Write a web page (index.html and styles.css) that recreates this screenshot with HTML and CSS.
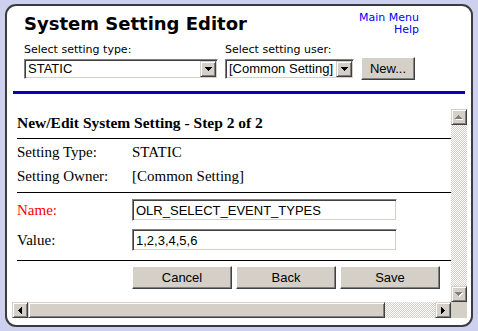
FILE: index.html
```html
<!DOCTYPE html>
<html lang="en">
<head>
    <meta charset="UTF-8">
    <title>System Setting Editor</title>
    <link rel="stylesheet" href="styles.css">
</head>
<body>
    <div class="frame">
        <div class="header">
            <h1 class="title">System Setting Editor</h1>
            <div class="links">
                <a href="#">Main Menu</a>
                <a href="#">Help</a>
            </div>
        </div>

        <div class="pickers">
            <div class="picker picker-type">
                <label>Select setting type:</label>
                <div class="combo">
                    <span class="combo-text">STATIC</span>
                    <span class="combo-btn">
                        <svg width="7" height="4" viewBox="0 0 7 4"><path d="M0 0h7v1H6v1H5v1H4v1H3V3H2V2H1V1H0z" fill="#000"/></svg>
                    </span>
                </div>
            </div>
            <div class="picker picker-user">
                <label>Select setting user:</label>
                <div class="combo">
                    <span class="combo-text">[Common Setting]</span>
                    <span class="combo-btn">
                        <svg width="7" height="4" viewBox="0 0 7 4"><path d="M0 0h7v1H6v1H5v1H4v1H3V3H2V2H1V1H0z" fill="#000"/></svg>
                    </span>
                </div>
            </div>
            <button class="btn btn-new">New...</button>
        </div>

        <div class="rule"></div>

        <div class="pane">
            <div class="viewport">
                <div class="content">
                    <h2 class="step-title">New/Edit System Setting - Step 2 of 2</h2>
                    <hr>
                    <div class="info-row">
                        <span>Setting Type:</span>
                        <span>STATIC</span>
                    </div>
                    <div class="info-row">
                        <span>Setting Owner:</span>
                        <span>[Common Setting]</span>
                    </div>
                    <hr class="hr-mid">
                    <div class="field-row">
                        <label for="name" class="required">Name:</label>
                        <input type="text" id="name" value="OLR_SELECT_EVENT_TYPES">
                    </div>
                    <div class="field-row">
                        <label for="value">Value:</label>
                        <input type="text" id="value" value="1,2,3,4,5,6">
                    </div>
                    <hr class="hr-end">
                    <div class="actions">
                        <button class="btn">Cancel</button>
                        <button class="btn">Back</button>
                        <button class="btn">Save</button>
                    </div>
                </div>
            </div>

            <!-- vertical scrollbar (disabled) -->
            <div class="vbar">
                <span class="sb-btn">
                    <svg width="8" height="5" viewBox="0 0 8 5">
                        <path d="M3 0h1v1h1v1h1v1h1v1H0V3h1V2h1V1h1z" fill="#fff" transform="translate(1 1)"/>
                        <path d="M3 0h1v1h1v1h1v1h1v1H0V3h1V2h1V1h1z" fill="#808080"/>
                    </svg>
                </span>
                <span class="sb-track"></span>
                <span class="sb-btn">
                    <svg width="8" height="5" viewBox="0 0 8 5">
                        <path d="M0 0h7v1H6v1H5v1H4v1H3V3H2V2H1V1H0z" fill="#fff" transform="translate(1 1)"/>
                        <path d="M0 0h7v1H6v1H5v1H4v1H3V3H2V2H1V1H0z" fill="#808080"/>
                    </svg>
                </span>
            </div>

            <!-- horizontal scrollbar -->
            <div class="hbar">
                <span class="sb-btn">
                    <svg width="4" height="7" viewBox="0 0 4 7"><path d="M3 0h1v7H3V6H2V5H1V4H0V3h1V2h1V1h1z" fill="#000"/></svg>
                </span>
                <span class="sb-thumb"></span>
                <span class="sb-track"></span>
                <span class="sb-btn">
                    <svg width="4" height="7" viewBox="0 0 4 7"><path d="M0 0h1v1h1v1h1v1h1v1H3v1H2v1H1v1H0z" fill="#000"/></svg>
                </span>
            </div>
            <div class="corner"></div>
        </div>
    </div>
</body>
</html>
```

FILE: styles.css
```css
:root {
    --face: #d4d0c8;
    --shadow: #808080;
    --dark: #404040;
    --white: #ffffff;
    --link: #0000ff;
}

* {
    box-sizing: border-box;
}

body {
    margin: 0;
    height: 331px;
    overflow: hidden;
    background-color: #cdd0ee;
}

.frame {
    margin: 4px 5px;
    height: 323px;
    border: 2px solid #3c3c3c;
    border-radius: 11px;
    background-color: var(--white);
    overflow: hidden;
}

/* header */

.header {
    display: flex;
    justify-content: space-between;
    align-items: flex-start;
    width: 395px;
    margin: 5px 0 0 17px;
}

.title {
    margin: 2px 0 0;
    font: bold 18px/22px "DejaVu Sans", Verdana, sans-serif;
    color: #000;
}

.links {
    display: flex;
    flex-direction: column;
    align-items: flex-end;
    margin-top: 1px;
    font: 11px/12px "DejaVu Sans", Verdana, sans-serif;
}

.links a {
    color: var(--link);
    text-decoration: none;
}

.pickers {
    display: flex;
    align-items: flex-end;
    gap: 7px;
    margin: 7px 0 0 17px;
}

.picker label {
    display: block;
    margin-bottom: 3px;
    font: 11px/13px "DejaVu Sans", Verdana, sans-serif;
    color: #000;
}

.picker-type .combo {
    width: 194px;
}

.picker-user .combo {
    width: 129px;
}

.combo {
    display: flex;
    align-items: center;
    height: 20px;
    padding: 1px;
    border: 1px solid;
    border-color: var(--shadow) var(--white) var(--white) var(--shadow);
    box-shadow: inset 1px 1px var(--dark), inset -1px -1px var(--face);
    background-color: var(--white);
}

.combo-text {
    flex: 1;
    padding-left: 2px;
    font: 13px/16px "Liberation Sans", Arial, sans-serif;
    white-space: nowrap;
    overflow: hidden;
}

.combo-btn {
    display: flex;
    align-items: center;
    justify-content: center;
    width: 16px;
    height: 16px;
    border: 1px solid;
    border-color: var(--face) var(--dark) var(--dark) var(--face);
    box-shadow: inset 1px 1px var(--white), inset -1px -1px var(--shadow);
    background-color: var(--face);
}

.btn {
    height: 23px;
    padding: 0;
    border: 1px solid;
    border-color: var(--white) var(--dark) var(--dark) var(--white);
    box-shadow: inset -1px -1px var(--shadow);
    background-color: var(--face);
    font: 13px "Liberation Sans", Arial, sans-serif;
    color: #000;
}

.btn-new {
    width: 54px;
    margin-bottom: -1px;
}

.rule {
    height: 3px;
    margin: 12px 6px 0;
    background-color: #0000bb;
}

/* scrolling pane */

.pane {
    display: grid;
    grid-template-columns: 439px 16px;
    grid-template-rows: 193px 16px;
    margin: 15px 4px 0 5px;
}

.viewport {
    overflow: hidden;
    background-color: var(--white);
}

.content {
    width: 520px;
    padding: 4px 0 0 5px;
    font: 15px/24px "Liberation Serif", "Times New Roman", serif;
    color: #000;
}

.step-title {
    margin: 0;
    font: bold 15.5px/20px "Liberation Serif", "Times New Roman", serif;
}

hr {
    height: 1px;
    margin: 5px 0 1px;
    border: 0;
    background-color: #000;
}

.hr-mid {
    margin: 4px 0 2px;
}

.hr-end {
    margin: 5px 0 5px;
}

.info-row {
    display: grid;
    grid-template-columns: 115px auto;
}

.field-row {
    display: grid;
    grid-template-columns: 115px 265px;
    align-items: center;
    height: 30px;
}

.field-row .required {
    color: #ff0000;
}

.field-row input {
    width: 265px;
    height: 22px;
    padding: 0 3px;
    border: 1px solid;
    border-color: var(--shadow) var(--white) var(--white) var(--shadow);
    box-shadow: inset 1px 1px var(--dark), inset -1px -1px var(--face);
    font: 13px "Liberation Sans", Arial, sans-serif;
    color: #000;
    outline: none;
}

.actions {
    display: flex;
    gap: 4px;
    margin-left: 115px;
}

.actions .btn {
    width: 100px;
}

.vbar,
.hbar {
    display: flex;
    background: repeating-conic-gradient(var(--face) 0 25%, var(--white) 0 50%) 0 0 / 2px 2px;
}

.vbar {
    flex-direction: column;
}

.sb-btn,
.sb-thumb {
    border: 1px solid;
    border-color: var(--face) var(--dark) var(--dark) var(--face);
    box-shadow: inset 1px 1px var(--white), inset -1px -1px var(--shadow);
    background-color: var(--face);
}

.sb-btn {
    display: flex;
    align-items: center;
    justify-content: center;
    width: 16px;
    height: 16px;
    flex: none;
}

.sb-thumb {
    width: 357px;
    flex: none;
}

.sb-track {
    flex: 1;
}

.corner {
    background-color: var(--face);
}
```
